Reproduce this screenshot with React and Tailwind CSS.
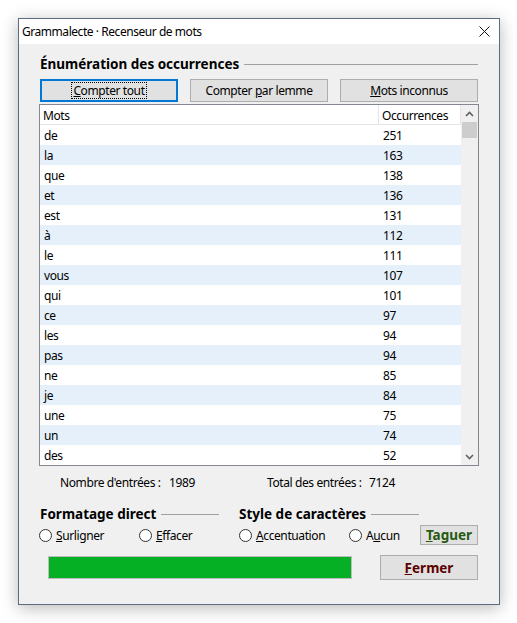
import React from 'react';

const ROWS = [
  ['de', 251], ['la', 163], ['que', 138], ['et', 136], ['est', 131], ['à', 112],
  ['le', 111], ['vous', 107], ['qui', 101], ['ce', 97], ['les', 94], ['pas', 94],
  ['ne', 85], ['je', 84], ['une', 75], ['un', 74], ['des', 52],
];

const FONT = { fontFamily: '"Noto Sans", "Liberation Sans", sans-serif' };

function Btn({ children, primary, className = '' }) {
  return (
    <div
      className={
        'flex items-center justify-center bg-[#e1e1e1] text-[12px] text-black ' +
        (primary ? 'border-2 border-[#0078d7] ' : 'border border-[#adadad] ') +
        className
      }
    >
      <span className="whitespace-nowrap pt-px">{children}</span>
    </div>
  );
}

function Radio({ children, className = '' }) {
  return (
    <div className={'flex items-center gap-[4px] ' + className}>
      <span className="w-[13px] h-[13px] rounded-full border border-[#333] bg-white shrink-0" />
      <span className="text-[12px] tracking-[-0.4px] pt-px">{children}</span>
    </div>
  );
}

function GroupTitle({ children, className = '' }) {
  return (
    <div className={'flex items-center h-[16px] ' + className}>
      <span className="font-bold text-[13.5px] text-black whitespace-nowrap pt-px">{children}</span>
      <span className="flex-1 h-px bg-[#a0a0a0] ml-[5px]" />
    </div>
  );
}

function Chevron({ up }) {
  return (
    <svg width="9" height="6" viewBox="0 0 9 6">
      <polyline
        points={up ? '1,5 4.5,1.5 8,5' : '1,1 4.5,4.5 8,1'}
        fill="none"
        stroke="#606060"
        strokeWidth="1.6"
      />
    </svg>
  );
}

export default function App() {
  return (
    <div className="w-[517px] h-[623px] bg-white pt-[18px] pl-[18px]" style={FONT}>
      <div className="w-[482px] h-[587px] border border-[#5b6b82] bg-[#f0f0f0] flex flex-col shadow-[0_3px_16px_rgba(0,0,0,0.28)]">
        {/* title bar */}
        <div className="h-[25px] bg-white flex items-center pl-[3px] pr-[9px] text-[12px] text-black">
          <span className="tracking-[-0.45px]">Grammalecte · Recenseur de mots</span>
          <svg className="ml-auto" width="11" height="11" viewBox="0 0 11 11">
            <path d="M0.5 0.5 L10.5 10.5 M10.5 0.5 L0.5 10.5" stroke="#111" strokeWidth="1" />
          </svg>
        </div>

        <div className="flex flex-col px-[21px] pt-[12px]">
          <GroupTitle>Énumération des occurrences</GroupTitle>

          <div className="grid grid-cols-3 gap-[12px] mt-[7px] h-[20px] tracking-[-0.4px]">
            <Btn primary>
              <span className="outline outline-1 outline-dotted outline-black px-px inline-block leading-[15px]">
                <u>C</u>ompter tout
              </span>
            </Btn>
            <Btn>
              Compter <u>p</u>ar lemme
            </Btn>
            <Btn>
              <u>M</u>ots inconnus
            </Btn>
          </div>

          {/* table */}
          <div className="mt-[5px] -ml-px w-[440px] border border-[#828790] bg-white flex text-[12px] text-black tracking-[-0.4px]">
            <div className="flex-1 flex flex-col">
              <div className="h-[20px] flex border-b border-[#e5e5e5]">
                <div className="w-[339px] pl-[3px] pt-[2px] flex items-center border-r border-[#e5e5e5]">Mots</div>
                <div className="flex-1 pl-[3px] pt-[2px] flex items-center border-r border-[#e5e5e5]">Occurrences</div>
              </div>
              {ROWS.map(([w, n], i) => (
                <div
                  key={w + i}
                  className={'h-[20px] flex items-center pt-px ' + (i % 2 ? 'bg-[#e5f0fb]' : 'bg-white')}
                >
                  <div className="w-[339px] pl-[4px]">{w}</div>
                  <div className="flex-1 pl-[4px]">{n}</div>
                </div>
              ))}
            </div>
            <div className="w-[17px] bg-[#f0f0f0] flex flex-col items-center">
              <div className="h-[17px] flex items-center justify-center">
                <Chevron up />
              </div>
              <div className="w-[15px] h-[16px] bg-[#cdcdcd]" />
              <div className="flex-1" />
              <div className="h-[17px] flex items-center justify-center">
                <Chevron />
              </div>
            </div>
          </div>

          {/* stats */}
          <div className="mt-[8px] h-[16px] flex items-center pl-[20px] pt-px text-[12px] text-black tracking-[-0.4px] whitespace-nowrap">
            <span className="w-[109px]">Nombre d'entrées :</span>
            <span className="w-[98px]">1989</span>
            <span className="w-[102px]">Total des entrées :</span>
            <span>7124</span>
          </div>

          {/* group titles */}
          <div className="mt-[16px] flex">
            <GroupTitle className="w-[179px]">Formatage direct</GroupTitle>
            <GroupTitle className="w-[180px] ml-[20px]">Style de caractères</GroupTitle>
          </div>

          {/* radios */}
          <div className="mt-[3px] h-[20px] flex items-center -ml-px text-black">
            <Radio className="w-[100px]">
              <u>S</u>urligner
            </Radio>
            <Radio className="w-[100px]">
              <u>E</u>ffacer
            </Radio>
            <Radio className="w-[110px]">
              <u>A</u>ccentuation
            </Radio>
            <Radio className="w-[71px]">
              A<u>u</u>cun
            </Radio>
            <Btn className="w-[58px] h-[20px] !text-[13.5px] font-bold !text-[#255a10]">
              <u>T</u>aguer
            </Btn>
          </div>

          {/* progress + close */}
          <div className="mt-[10px] h-[25px] flex items-center">
            <div className="ml-[8px] w-[304px] h-[23px] border border-[#bcbcbc] bg-[#e6e6e6]">
              <div className="w-full h-full bg-[#06b025]" />
            </div>
            <Btn className="ml-auto w-[98px] h-[25px] !text-[13.5px] font-bold !text-[#5c0000]">
              <u>F</u>ermer
            </Btn>
          </div>
        </div>
      </div>
    </div>
  );
}
